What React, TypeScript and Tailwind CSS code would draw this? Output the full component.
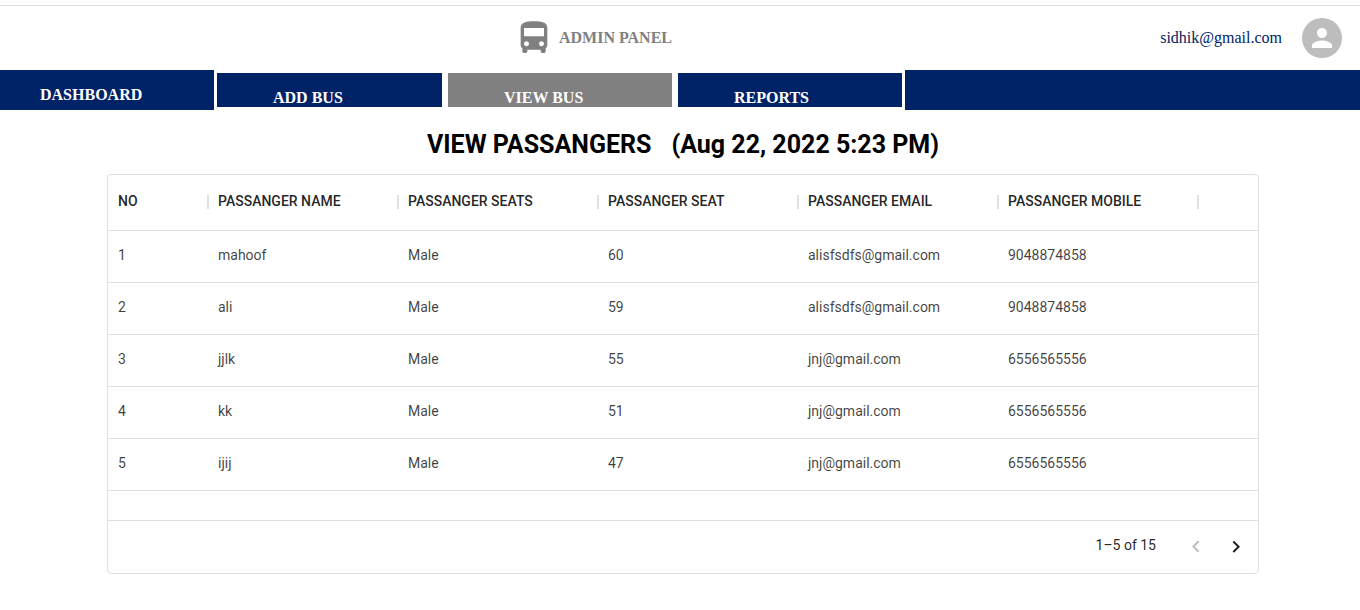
import React from "react";

type Passenger = {
  no: number;
  name: string;
  gender: string;
  seat: number;
  email: string;
  mobile: string;
};

const passengers: Passenger[] = [
  { no: 1, name: "mahoof", gender: "Male", seat: 60, email: "alisfsdfs@gmail.com", mobile: "9048874858" },
  { no: 2, name: "ali", gender: "Male", seat: 59, email: "alisfsdfs@gmail.com", mobile: "9048874858" },
  { no: 3, name: "jjlk", gender: "Male", seat: 55, email: "jnj@gmail.com", mobile: "6556565556" },
  { no: 4, name: "kk", gender: "Male", seat: 51, email: "jnj@gmail.com", mobile: "6556565556" },
  { no: 5, name: "ijij", gender: "Male", seat: 47, email: "jnj@gmail.com", mobile: "6556565556" },
];

const columns = [
  { title: "NO", width: "w-[100px]" },
  { title: "PASSANGER NAME", width: "w-[190px]" },
  { title: "PASSANGER SEATS", width: "w-[200px]" },
  { title: "PASSANGER SEAT", width: "w-[200px]" },
  { title: "PASSANGER EMAIL", width: "w-[200px]" },
  { title: "PASSANGER MOBILE", width: "w-[200px]" },
];

function Icon({ d, className }: { d: string; className: string }) {
  return (
    <svg viewBox="0 0 24 24" fill="currentColor" aria-hidden="true" className={className}>
      <path d={d} />
    </svg>
  );
}

const BUS =
  "M4 16c0 .88.39 1.67 1 2.22V20c0 .55.45 1 1 1h1c.55 0 1-.45 1-1v-1h8v1c0 .55.45 1 1 1h1c.55 0 1-.45 1-1v-1.78c.61-.55 1-1.34 1-2.22V6c0-3.5-3.58-4-8-4s-8 .5-8 4v10zm3.5 1c-.83 0-1.5-.67-1.5-1.5S6.67 14 7.5 14s1.5.67 1.5 1.5S8.33 17 7.5 17zm9 0c-.83 0-1.5-.67-1.5-1.5s.67-1.5 1.5-1.5 1.5.67 1.5 1.5-.67 1.5-1.5 1.5zm1.5-6H6V6h12v5z";
const PERSON =
  "M12 12c2.21 0 4-1.79 4-4s-1.79-4-4-4-4 1.79-4 4 1.79 4 4 4zm0 2c-2.67 0-8 1.34-8 4v2h16v-2c0-2.66-5.33-4-8-4z";
const PREVIOUS = "M15.41 16.09l-4.58-4.59 4.58-4.59L14 5.5l-6 6 6 6z";
const NEXT = "M8.59 16.34l4.58-4.59-4.58-4.59L10 5.75l6 6-6 6z";

function Header() {
  return (
    <header className="grid h-16 grid-cols-[1fr_auto_1fr] items-center pr-[18px]">
      <span />
      <div className="mr-[156px] flex items-center gap-[5px] text-[#808080]">
        <Icon d={BUS} className="size-10" />
        <span className="text-base font-bold">ADMIN PANEL</span>
      </div>
      <div className="flex items-center justify-end gap-5 text-[#002266]">
        <span className="text-base">sidhik@gmail.com</span>
        <span className="flex size-10 items-center justify-center rounded-full bg-[#bdbdbd] text-white">
          <Icon d={PERSON} className="size-[30px]" />
        </span>
      </div>
    </header>
  );
}

function Nav() {
  const tab = "border-[3px] border-white pl-14 pt-4";
  return (
    <nav className="grid h-10 grid-cols-[214fr_691fr_455fr] bg-[#002266] text-base leading-[18px] font-bold text-white">
      <a href="#dashboard" className="pt-4 pl-10">DASHBOARD</a>
      <div className="grid grid-cols-[231fr_230fr_230fr]">
        <a href="#add-bus" className={tab}>ADD BUS</a>
        <a href="#view-bus" aria-current="page" className={`${tab} bg-[#808080]`}>VIEW BUS</a>
        <a href="#reports" className={tab}>REPORTS</a>
      </div>
    </nav>
  );
}

function PassengerTable() {
  const cell = "h-[52px] border-b border-[#e0e0e0] px-2.5 pb-1";
  return (
    <div className="rounded border border-[#e0e0e0] text-sm text-black/87">
      <table className="w-full table-fixed border-separate border-spacing-0 text-left">
        <thead>
          <tr>
            {columns.map((column) => (
              <th
                key={column.title}
                scope="col"
                className={`${column.width} h-14 border-b border-[#e0e0e0] pb-0.5 pl-2.5 font-medium`}
              >
                <div className="-mr-px flex items-center justify-between">
                  <span className="pb-0.5">{column.title}</span>
                  <span className="h-3.5 w-0.5 bg-[#e0e0e0]" />
                </div>
              </th>
            ))}
            <td className="border-b border-[#e0e0e0]" />
          </tr>
        </thead>
        <tbody className="text-black/75">
          {passengers.map((p) => (
            <tr key={p.no}>
              <td className={cell}>{p.no}</td>
              <td className={cell}>{p.name}</td>
              <td className={cell}>{p.gender}</td>
              <td className={cell}>{p.seat}</td>
              <td className={cell}>{p.email}</td>
              <td className={cell}>{p.mobile}</td>
              <td className={cell} />
            </tr>
          ))}
          <tr>
            <td colSpan={7} className="h-[30px] border-b border-[#e0e0e0]" />
          </tr>
        </tbody>
      </table>
      <div className="flex h-[52px] items-center justify-end pr-0.5">
        <p className="mr-5 pb-1">1–5 of 15</p>
        <button type="button" disabled aria-label="Previous page" className="p-2 text-black/26">
          <Icon d={PREVIOUS} className="size-6" />
        </button>
        <button type="button" aria-label="Next page" className="p-2">
          <Icon d={NEXT} className="size-6" />
        </button>
      </div>
    </div>
  );
}

export default function App() {
  return (
    <div className="min-h-screen bg-white pt-[5px] font-['Liberation_Serif',serif]">
      <div className="border-t border-[#dcdcdc]">
        <Header />
        <Nav />
      </div>
      <main className="pr-[101px] pl-[107px] font-[Roboto,sans-serif]">
        <h1 className="flex h-16 justify-center gap-5 pt-5 text-[25px] leading-[30px] font-bold text-black">
          <span>VIEW PASSANGERS</span>
          <span>(Aug 22, 2022 5:23 PM)</span>
        </h1>
        <PassengerTable />
      </main>
    </div>
  );
}
